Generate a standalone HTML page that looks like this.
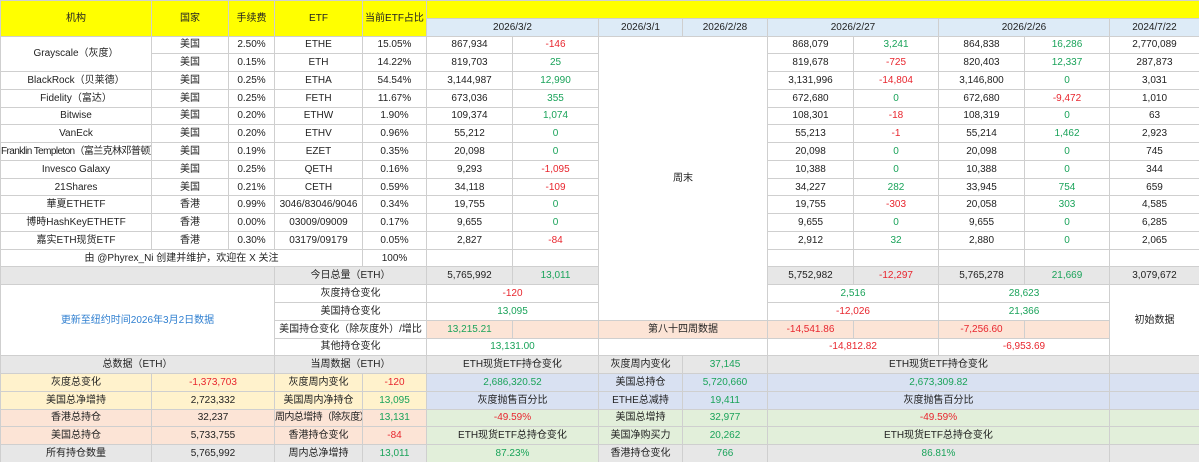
<!DOCTYPE html>
<html><head><meta charset="utf-8"><style>
html,body{margin:0;padding:0;background:#fff;width:1199px;height:462px;overflow:hidden}
table{border-collapse:collapse;table-layout:fixed;width:1199px;font-family:"Liberation Sans","Noto Sans CJK SC",sans-serif;font-size:10px;color:#222}
td{border:1px solid #cfcfcf;padding:0;text-align:center;height:16.77px;line-height:15px;white-space:nowrap;overflow:hidden}
tr{height:17.77px}
.y{background:#ffff00}.d{background:#ddebf7}.g{background:#e7e7e7}.ly{background:#fff2cc}.pk{background:#fce4d6}.bl{background:#d9e1f2}.gr{background:#e2efda}
.r{color:#e8262e}.n{color:#1aa35a}.b{color:#2f7fd0}
.sm{letter-spacing:-0.6px}
</style></head><body>
<table>
<colgroup><col style="width:151px"><col style="width:77px"><col style="width:46px"><col style="width:88px"><col style="width:64px"><col style="width:86px"><col style="width:86px"><col style="width:84px"><col style="width:85px"><col style="width:86px"><col style="width:85px"><col style="width:86px"><col style="width:85px"><col style="width:90px"></colgroup>
<tr><td class="y" rowspan="2">机构</td><td class="y" rowspan="2">国家</td><td class="y" rowspan="2">手续费</td><td class="y" rowspan="2">ETF</td><td class="y" rowspan="2">当前ETF占比</td><td class="y" colspan="9"></td></tr>
<tr><td class="d" colspan="2">2026/3/2</td><td class="d">2026/3/1</td><td class="d">2026/2/28</td><td class="d" colspan="2">2026/2/27</td><td class="d" colspan="2">2026/2/26</td><td class="d">2024/7/22</td></tr>
<tr><td rowspan="2">Grayscale（灰度）</td><td>美国</td><td>2.50%</td><td>ETHE</td><td>15.05%</td><td>867,934</td><td class="r">-146</td><td colspan="2" rowspan="16">周末</td><td>868,079</td><td class="n">3,241</td><td>864,838</td><td class="n">16,286</td><td>2,770,089</td></tr>
<tr><td>美国</td><td>0.15%</td><td>ETH</td><td>14.22%</td><td>819,703</td><td class="n">25</td><td>819,678</td><td class="r">-725</td><td>820,403</td><td class="n">12,337</td><td>287,873</td></tr>
<tr><td>BlackRock（贝莱德）</td><td>美国</td><td>0.25%</td><td>ETHA</td><td>54.54%</td><td>3,144,987</td><td class="n">12,990</td><td>3,131,996</td><td class="r">-14,804</td><td>3,146,800</td><td class="n">0</td><td>3,031</td></tr>
<tr><td>Fidelity（富达）</td><td>美国</td><td>0.25%</td><td>FETH</td><td>11.67%</td><td>673,036</td><td class="n">355</td><td>672,680</td><td class="n">0</td><td>672,680</td><td class="r">-9,472</td><td>1,010</td></tr>
<tr><td>Bitwise</td><td>美国</td><td>0.20%</td><td>ETHW</td><td>1.90%</td><td>109,374</td><td class="n">1,074</td><td>108,301</td><td class="r">-18</td><td>108,319</td><td class="n">0</td><td>63</td></tr>
<tr><td>VanEck</td><td>美国</td><td>0.20%</td><td>ETHV</td><td>0.96%</td><td>55,212</td><td class="n">0</td><td>55,213</td><td class="r">-1</td><td>55,214</td><td class="n">1,462</td><td>2,923</td></tr>
<tr><td class="sm">Franklin Templeton（富兰克林邓普顿）</td><td>美国</td><td>0.19%</td><td>EZET</td><td>0.35%</td><td>20,098</td><td class="n">0</td><td>20,098</td><td class="n">0</td><td>20,098</td><td class="n">0</td><td>745</td></tr>
<tr><td>Invesco Galaxy</td><td>美国</td><td>0.25%</td><td>QETH</td><td>0.16%</td><td>9,293</td><td class="r">-1,095</td><td>10,388</td><td class="n">0</td><td>10,388</td><td class="n">0</td><td>344</td></tr>
<tr><td>21Shares</td><td>美国</td><td>0.21%</td><td>CETH</td><td>0.59%</td><td>34,118</td><td class="r">-109</td><td>34,227</td><td class="n">282</td><td>33,945</td><td class="n">754</td><td>659</td></tr>
<tr><td>華夏ETHETF</td><td>香港</td><td>0.99%</td><td>3046/83046/9046</td><td>0.34%</td><td>19,755</td><td class="n">0</td><td>19,755</td><td class="r">-303</td><td>20,058</td><td class="n">303</td><td>4,585</td></tr>
<tr><td>博時HashKeyETHETF</td><td>香港</td><td>0.00%</td><td>03009/09009</td><td>0.17%</td><td>9,655</td><td class="n">0</td><td>9,655</td><td class="n">0</td><td>9,655</td><td class="n">0</td><td>6,285</td></tr>
<tr><td>嘉实ETH现货ETF</td><td>香港</td><td>0.30%</td><td>03179/09179</td><td>0.05%</td><td>2,827</td><td class="r">-84</td><td>2,912</td><td class="n">32</td><td>2,880</td><td class="n">0</td><td>2,065</td></tr>
<tr><td colspan="4">由 @Phyrex_Ni 创建并维护，欢迎在 X 关注</td><td>100%</td><td></td><td></td><td></td><td></td><td></td><td></td><td></td></tr>
<tr><td class="g" colspan="3"></td><td class="g" colspan="2">今日总量（ETH）</td><td class="g">5,765,992</td><td class="g n">13,011</td><td class="g">5,752,982</td><td class="g r">-12,297</td><td class="g">5,765,278</td><td class="g n">21,669</td><td class="g">3,079,672</td></tr>
<tr><td colspan="3" rowspan="4" class="b">更新至纽约时间2026年3月2日数据</td><td colspan="2">灰度持仓变化</td><td colspan="2" class="r">-120</td><td colspan="2" class="n">2,516</td><td colspan="2" class="n">28,623</td><td rowspan="4">初始数据</td></tr>
<tr><td colspan="2">美国持仓变化</td><td colspan="2" class="n">13,095</td><td colspan="2" class="r">-12,026</td><td colspan="2" class="n">21,366</td></tr>
<tr><td colspan="2">美国持仓变化（除灰度外）/增比</td><td class="pk n">13,215.21</td><td class="pk"></td><td class="pk" colspan="2">第八十四周数据</td><td class="pk r">-14,541.86</td><td class="pk"></td><td class="pk r">-7,256.60</td><td class="pk"></td></tr>
<tr><td colspan="2">其他持仓变化</td><td colspan="2" class="n">13,131.00</td><td colspan="2"></td><td colspan="2" class="r">-14,812.82</td><td colspan="2" class="r">-6,953.69</td></tr>
<tr><td class="g" colspan="3">总数据（ETH）</td><td class="g" colspan="2">当周数据（ETH）</td><td class="g" colspan="2">ETH现货ETF持仓变化</td><td class="g">灰度周内变化</td><td class="g n">37,145</td><td class="g" colspan="4">ETH现货ETF持仓变化</td><td class="g"></td></tr>
<tr><td class="ly">灰度总变化</td><td class="ly r" colspan="2">-1,373,703</td><td class="ly">灰度周内变化</td><td class="ly r">-120</td><td class="bl n" colspan="2">2,686,320.52</td><td class="bl">美国总持仓</td><td class="bl n">5,720,660</td><td class="bl n" colspan="4">2,673,309.82</td><td class="bl"></td></tr>
<tr><td class="ly">美国总净增持</td><td class="ly" colspan="2">2,723,332</td><td class="ly">美国周内净持仓</td><td class="ly n">13,095</td><td class="bl" colspan="2">灰度抛售百分比</td><td class="bl">ETHE总减持</td><td class="bl n">19,411</td><td class="bl" colspan="4">灰度抛售百分比</td><td class="bl"></td></tr>
<tr><td class="pk">香港总持仓</td><td class="pk" colspan="2">32,237</td><td class="pk sm">周内总增持（除灰度）</td><td class="pk n">13,131</td><td class="gr r" colspan="2">-49.59%</td><td class="gr">美国总增持</td><td class="gr n">32,977</td><td class="gr r" colspan="4">-49.59%</td><td class="gr"></td></tr>
<tr><td class="pk">美国总持仓</td><td class="pk" colspan="2">5,733,755</td><td class="pk">香港持仓变化</td><td class="pk r">-84</td><td class="gr" colspan="2">ETH现货ETF总持仓变化</td><td class="gr">美国净购买力</td><td class="gr n">20,262</td><td class="gr" colspan="4">ETH现货ETF总持仓变化</td><td class="gr"></td></tr>
<tr><td class="g">所有持仓数量</td><td class="g" colspan="2">5,765,992</td><td class="g">周内总净增持</td><td class="g n">13,011</td><td class="gr n" colspan="2">87.23%</td><td class="g">香港持仓变化</td><td class="g n">766</td><td class="g n" colspan="4">86.81%</td><td class="g"></td></tr>
</table>
</body></html>
